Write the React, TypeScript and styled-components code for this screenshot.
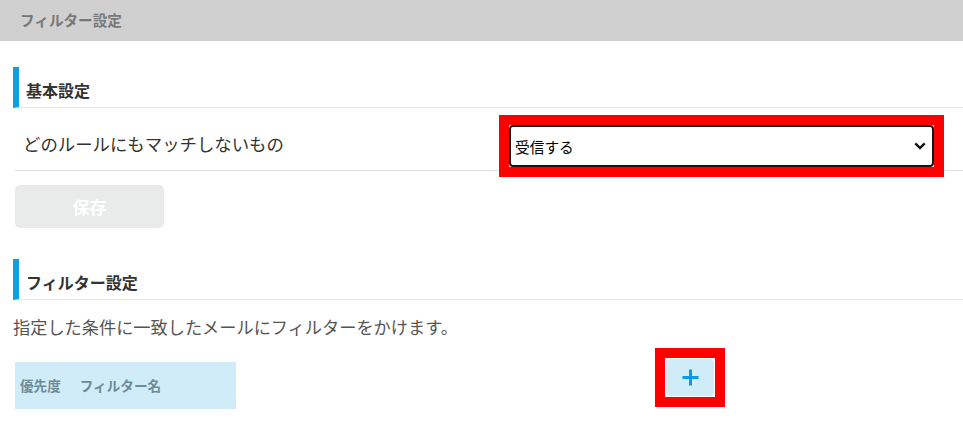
import React from "react";
import styled, { createGlobalStyle } from "styled-components";

const GlobalStyle = createGlobalStyle`
  html, body {
    margin: 0;
    padding: 0;
    background: #ffffff;
    font-family: "Noto Sans CJK JP", "Noto Sans", sans-serif;
    color: #333333;
  }
  * { box-sizing: border-box; }
`;

const Page = styled.div`
  width: 963px;
  height: 430px;
  overflow: hidden;
  background: #ffffff;
`;

const TopBar = styled.div`
  height: 41px;
  background: #d0d0d0;
  display: flex;
  align-items: center;
  padding: 0 0 1px 20px;
  font-size: 14.6px;
  font-weight: 700;
  color: #787878;
  line-height: 1;
`;

const Content = styled.div`
  padding-left: 13px;
  display: flex;
  flex-direction: column;
`;

const SectionHeading = styled.h2<{ $top: number }>`
  margin: ${(p) => p.$top}px 0 0 0;
  height: 41px;
  display: flex;
  align-items: center;
  padding: 5px 0 0 7px;
  border-left: 6px solid #0aa0e6;
  border-bottom: 1px solid #e6e6e6;
  font-size: 16px;
  font-weight: 700;
  color: #333333;
  line-height: 1;
`;

const SettingRow = styled.div`
  margin-left: 2px;
  display: flex;
  align-items: center;
  padding: 17px 29px 3px 8px;
  border-bottom: 1px solid #dedede;
`;

const RowLabel = styled.div`
  flex: 1;
  font-size: 17.4px;
  color: #333333;
  line-height: 1;
  padding-bottom: 5px;
`;

const Highlight = styled.div<{ $left?: number }>`
  position: relative;
  display: flex;
  padding: 0;
  margin-left: ${(p) => p.$left ?? 0}px;
  background: #ffffff;
  outline: 10px solid #ff0000;
`;

const Select = styled.select`
  appearance: none;
  -webkit-appearance: none;
  width: 425px;
  height: 42px;
  border: 2px solid #151515;
  border-radius: 4px;
  background: #ffffff;
  padding: 0 30px 0 4px;
  font-family: "Noto Sans CJK JP", sans-serif;
  font-size: 14.7px;
  color: #000000;
  outline: none;
`;

const Chevron = styled.svg`
  position: absolute;
  right: 8px;
  top: 50%;
  margin-top: -4px;
  width: 12px;
  height: 8px;
  pointer-events: none;
`;

const SaveButton = styled.button`
  margin: 14px 0 0 2px;
  width: 149px;
  height: 43px;
  border: none;
  border-radius: 5px;
  background: #e9ebeb;
  color: #ffffff;
  font-family: "Noto Sans CJK JP", sans-serif;
  font-size: 17px;
  font-weight: 700;
  line-height: 1;
  align-self: flex-start;
`;

const Description = styled.p`
  margin: 18px 0 0 0;
  font-size: 17.2px;
  line-height: 1;
  color: #555555;
`;

const TableArea = styled.div`
  display: flex;
  align-items: flex-start;
  margin-top: 23px;
  margin-left: 2px;
`;

const TableHead = styled.div`
  width: 221px;
  height: 47px;
  margin-top: 4px;
  background: #d1ecf9;
  display: flex;
  align-items: center;
  padding-left: 5px;
  gap: 19px;
  font-size: 13.6px;
  font-weight: 700;
  color: #6c8b98;
  line-height: 1;
`;

const AddButton = styled.button`
  width: 50px;
  height: 39px;
  border: 1px solid #ffffff;
  border-radius: 5px;
  background: #d1ecf9;
  display: flex;
  align-items: center;
  justify-content: center;
  padding: 0;
`;

export default function App() {
  return (
    <Page>
      <GlobalStyle />
      <TopBar>フィルター設定</TopBar>
      <Content>
        <SectionHeading $top={26}>基本設定</SectionHeading>
        <SettingRow>
          <RowLabel>どのルールにもマッチしないもの</RowLabel>
          <Highlight>
            <Select defaultValue="accept">
              <option value="accept">受信する</option>
              <option value="reject">受信しない</option>
            </Select>
            <Chevron viewBox="0 0 12 8">
              <path d="M1.3 1.3 L6 6 L10.7 1.3" fill="none" stroke="#111" strokeWidth="2.4" />
            </Chevron>
          </Highlight>
        </SettingRow>
        <SaveButton>保存</SaveButton>
        <SectionHeading $top={31}>フィルター設定</SectionHeading>
        <Description>指定した条件に一致したメールにフィルターをかけます。</Description>
        <TableArea>
          <TableHead>
            <span>優先度</span>
            <span>フィルター名</span>
          </TableHead>
          <Highlight $left={429}>
            <AddButton aria-label="追加">
              <svg width="17" height="17" viewBox="0 0 17 17">
                <path d="M8.5 0.5 V16.5 M0.5 8.5 H16.5" stroke="#0b9be2" strokeWidth="3" fill="none" />
              </svg>
            </AddButton>
          </Highlight>
        </TableArea>
      </Content>
    </Page>
  );
}
